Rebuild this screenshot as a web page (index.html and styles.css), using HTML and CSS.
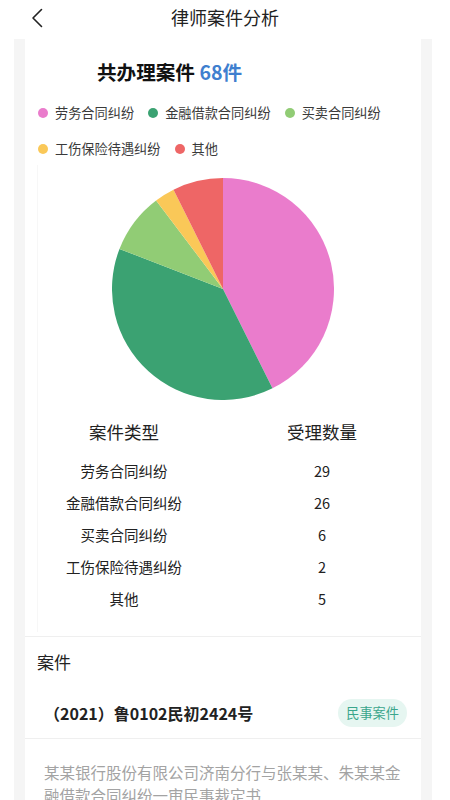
FILE: index.html
```html
<!DOCTYPE html>
<html lang="zh-CN">
<head>
    <meta charset="UTF-8">
    <meta name="viewport" content="width=device-width, initial-scale=1.0">
    <title>律师案件分析</title>
    <link rel="stylesheet" href="styles.css">
</head>
<body>
    <header class="navbar">
        <div class="back">
            <svg width="12" height="20" viewBox="0 0 12 20">
                <path d="M10.5 1.5 L2 10 L10.5 18.5" fill="none" stroke="#222" stroke-width="1.6" stroke-linecap="round" stroke-linejoin="round"/>
            </svg>
        </div>
        <h1 class="navTitle">律师案件分析</h1>
        <div></div>
    </header>

    <main class="page">
        <section class="card statsCard">
            <h2 class="total">共办理案件 <span class="totalNum">68件</span></h2>

            <ul class="legend">
                <li><i class="dot" style="background:#ea7ccc"></i>劳务合同纠纷</li>
                <li><i class="dot" style="background:#3ba272"></i>金融借款合同纠纷</li>
                <li><i class="dot" style="background:#91cc75"></i>买卖合同纠纷</li>
                <li><i class="dot" style="background:#fac858"></i>工伤保险待遇纠纷</li>
                <li><i class="dot" style="background:#ee6666"></i>其他</li>
            </ul>

            <div class="chartBox">
                <svg class="pie" width="222" height="222" viewBox="0 0 222 222">
                    <path d="M111 111 L111 0 A111 111 0 0 1 160.48 210.36 Z" fill="#ea7ccc"/>
                    <path d="M111 111 L160.48 210.36 A111 111 0 0 1 7.49 70.9 Z" fill="#3ba272"/>
                    <path d="M111 111 L7.49 70.9 A111 111 0 0 1 44.1 22.42 Z" fill="#91cc75"/>
                    <path d="M111 111 L44.1 22.42 A111 111 0 0 1 61.52 11.64 Z" fill="#fac858"/>
                    <path d="M111 111 L61.52 11.64 A111 111 0 0 1 111 0 Z" fill="#ee6666"/>
                </svg>

                <table class="typeTable">
                    <thead>
                        <tr><th>案件类型</th><th>受理数量</th></tr>
                    </thead>
                    <tbody>
                        <tr><td>劳务合同纠纷</td><td>29</td></tr>
                        <tr><td>金融借款合同纠纷</td><td>26</td></tr>
                        <tr><td>买卖合同纠纷</td><td>6</td></tr>
                        <tr><td>工伤保险待遇纠纷</td><td>2</td></tr>
                        <tr><td>其他</td><td>5</td></tr>
                    </tbody>
                </table>
            </div>
        </section>

        <section class="card caseCard">
            <h3 class="caseTitle">案件</h3>
            <div class="caseRow">
                <span class="caseNo">（2021）鲁0102民初2424号</span>
                <span class="tag">民事案件</span>
            </div>
            <p class="caseDesc">某某银行股份有限公司济南分行与张某某、朱某某金融借款合同纠纷一审民事裁定书</p>
        </section>
    </main>
</body>
</html>
```

FILE: styles.css
```css
body {
    margin: 0;
    padding: 0;
    background-color: #fff;
    color: #222;
    font-family: "Noto Sans CJK SC", "Noto Sans", sans-serif;
    height: 800px;
    overflow: hidden;
}

.navbar {
    display: grid;
    grid-template-columns: 1fr auto 1fr;
    align-items: center;
    height: 33px;
    padding-bottom: 6px;
}

.back {
    padding-left: 31px;
    display: flex;
    align-items: center;
    margin-top: 2px;
}

.navTitle {
    margin: 0;
    font-size: 18px;
    font-weight: 400;
    line-height: 24px;
    color: #222;
}

.page {
    margin-left: 14px;
    width: 396px;
    padding: 0 11px;
    min-height: 761px;
    background-color: #f5f5f5;
}

.card {
    background-color: #fff;
}

.statsCard {
    padding-top: 20px;
    border-bottom: 1px solid #efefef;
}

.total {
    margin: 0;
    padding-left: 72px;
    font-size: 19.6px;
    line-height: 26px;
    font-weight: 700;
    color: #111;
}

.totalNum {
    color: #3f7fcf;
}

.legend {
    list-style: none;
    margin: 18px 0 0;
    padding: 0 12px 0 13px;
    display: flex;
    flex-wrap: wrap;
    column-gap: 14px;
    row-gap: 16px;
}

.legend li {
    display: flex;
    align-items: center;
    gap: 7px;
    font-size: 13.2px;
    line-height: 20px;
    color: #3a3a3a;
}

.dot {
    width: 10px;
    height: 10px;
    border-radius: 50%;
}

.chartBox {
    position: relative;
    margin-top: 6px;
    padding: 13px 0 22px;
    display: flex;
    flex-direction: column;
    align-items: center;
}

.chartBox::before {
    content: "";
    position: absolute;
    left: 12px;
    top: 0;
    bottom: 4px;
    border-left: 1px solid #f7f7f7;
}

.pie {
    display: block;
}

.typeTable {
    width: 100%;
    margin-top: 20px;
    border-collapse: collapse;
    table-layout: fixed;
    text-align: center;
}

.typeTable th {
    width: 50%;
    font-size: 17.5px;
    font-weight: 400;
    line-height: 24px;
    padding: 0 0 10px;
    color: #222;
}

.typeTable td {
    font-size: 14.5px;
    height: 32px;
    padding: 0;
    color: #222;
}

.caseCard {
    min-height: 200px;
}

.caseTitle {
    margin: 0;
    padding: 13px 12px 0;
    font-size: 17px;
    font-weight: 400;
    line-height: 24px;
    color: #222;
}

.caseRow {
    margin-top: 14px;
    height: 50px;
    padding: 0 14px 0 19px;
    display: flex;
    align-items: center;
    justify-content: space-between;
    border-bottom: 1px solid #efefef;
}

.caseNo {
    font-size: 16px;
    font-weight: 700;
    color: #222;
}

.tag {
    height: 28px;
    line-height: 28px;
    padding: 0 8px;
    border-radius: 14px;
    background-color: #e6f6f1;
    color: #3aa68c;
    font-size: 13.2px;
}

.caseDesc {
    margin: 0;
    padding: 22px 19px 0;
    font-size: 15.5px;
    line-height: 23px;
    color: #a3a3a3;
}
```
